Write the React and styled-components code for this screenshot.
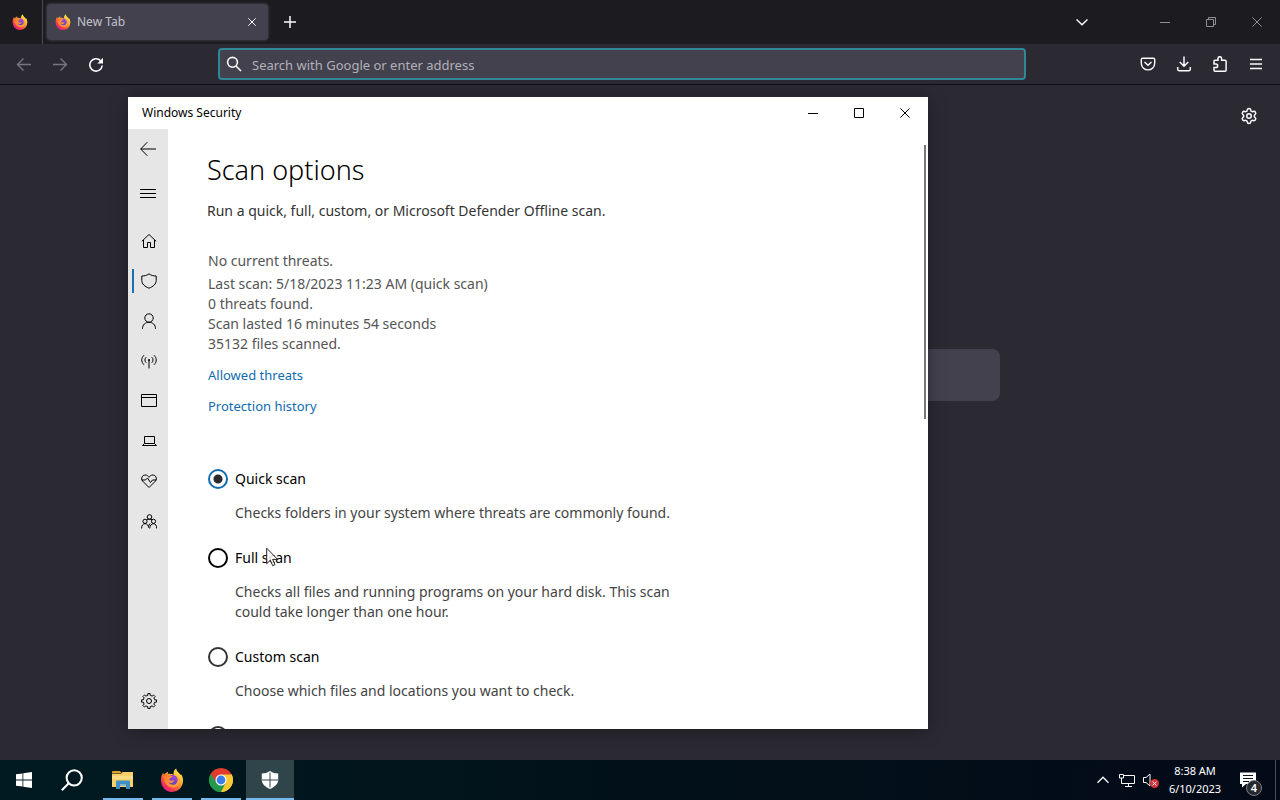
import React from "react";
import styled, { createGlobalStyle, css } from "styled-components";
import { Settings } from "lucide-react";

const Global = createGlobalStyle`
  * { box-sizing: border-box; }
  body { margin: 0; font-family: "Noto Sans", "Open Sans", sans-serif; background: #2b2a33; }
  button { border: 0; padding: 0; background: none; color: inherit; font: inherit; }
  h1, p { margin: 0; font-weight: 400; }
  svg { display: block; flex: none; }
`;

/* ---------- drawing helpers ---------- */

const Icon = ({ size = 16, box = 16, width = 1, children }) => (
  <svg
    width={size}
    height={size}
    viewBox={`0 0 ${box} ${box}`}
    fill="none"
    stroke="currentColor"
    strokeWidth={width}
    aria-hidden="true"
  >
    {children}
  </svg>
);

const gearPath = (teeth, outer, inner, c) => {
  const step = (Math.PI * 2) / teeth;
  const at = (r, a) => `${(c + r * Math.cos(a)).toFixed(2)} ${(c + r * Math.sin(a)).toFixed(2)}`;
  let d = "";
  for (let i = 0; i < teeth; i += 1) {
    const a = i * step - Math.PI / 2;
    d += `${i ? "L" : "M"}${at(inner, a - step * 0.27)}L${at(outer, a - step * 0.2)}L${at(outer, a + step * 0.2)}L${at(inner, a + step * 0.27)}`;
  }
  return `${d}Z`;
};

const FirefoxLogo = ({ size, id }) => (
  <svg width={size} height={size} viewBox="0 0 24 24" aria-hidden="true">
    <defs>
      <linearGradient id={`${id}-body`} x1="0.85" y1="0.1" x2="0.2" y2="0.95">
        <stop offset="0" stopColor="#fff04a" />
        <stop offset="0.3" stopColor="#ffb52e" />
        <stop offset="0.58" stopColor="#ff6b33" />
        <stop offset="0.82" stopColor="#f5325a" />
        <stop offset="1" stopColor="#e0218f" />
      </linearGradient>
      <linearGradient id={`${id}-globe`} x1="0.7" y1="0" x2="0.3" y2="1">
        <stop offset="0" stopColor="#a04ae0" />
        <stop offset="1" stopColor="#5a3fb8" />
      </linearGradient>
      <linearGradient id={`${id}-fox`} x1="0" y1="0" x2="1" y2="0.4">
        <stop offset="0" stopColor="#ff7a2c" />
        <stop offset="1" stopColor="#ffa03a" />
      </linearGradient>
    </defs>
    <path
      fill={`url(#${id}-body)`}
      d="M1 12.600C.8 9.500 1.500 6.900 3.200 4.500c.1 1 .4 1.700.9 2.200C5 5.400 6.500 4.200 8.200 3.700c-.4.8-.5 1.500-.3 2.300 1.800-.4 4.200-.2 5.700.7C13.200 4.300 14 2 16.200.4c.2 2.300 1.500 3.500 3 4.900.6.600 1 1.300 1.300 2l.4-1.300c1.600 2.100 2.300 4.500 2.100 7.200A11 11 0 0 1 1 12.600Z"
    />
    <circle cx="12.300" cy="12.100" r="5.400" fill={`url(#${id}-globe)`} />
    <path
      fill={`url(#${id}-fox)`}
      d="M4 7.200c1.500-1 3.500-1.100 5.200-.2 1.100.6 1.900.9 3.400 1-.2 1.300-1.300 1.700-2.600 2.200-.9.400-.6 1.700.3 2.200 1.300.8 2.700-.3 4 .2-.7 2.300-3.600 3-5.900 1.700 1.900 3 6.300 3.400 8.500.6 1.600-2.100 1.300-5-.4-6.800 2.700 1.100 4.100 4.200 3 7.200-1.300 3.300-5 5-8.500 4C6 18 3 13 4 7.200Z"
    />
  </svg>
);

const ChromeLogo = () => (
  <svg width="24" height="24" viewBox="0 0 24 24" aria-hidden="true">
    <path fill="#e33b2e" d="M12 12 1.610 6A12 12 0 0 1 22.390 6Z" />
    <path fill="#fcc934" d="M12 12 22.390 6A12 12 0 0 1 12 24Z" />
    <path fill="#239a4b" d="M12 12V24A12 12 0 0 1 1.610 6Z" />
    <path fill="#e33b2e" d="M12 6.500H22.660L22.390 6 12 4 1.610 6 7.200 14.700Z" />
    <path fill="#fcc934" d="M22.660 6.500H12L16.800 14.700 12 24c6 0 12-5 12-12a12 12 0 0 0-1.340-5.500Z" />
    <path fill="#239a4b" d="M1.610 6 7.200 14.700c2 3.400 6.400 3.900 9.600 0L12 24A12 12 0 0 1 1.610 6Z" />
    <circle cx="12" cy="12" r="5.500" fill="#fff" />
    <circle cx="12" cy="12" r="4.400" fill="#3a7de8" />
  </svg>
);

const FolderLogo = () => (
  <svg width="24" height="22" viewBox="0 0 24 22" aria-hidden="true">
    <path fill="#e0a02c" d="M1 3a1 1 0 0 1 1-1h7l2 2.500h-10Z" />
    <path fill="#f9d067" d="M1 5h9l1.500-2H22v15H1Z" />
    <path fill="#fbdc86" d="M1 7h21v3H1Z" />
    <path fill="#3f8fc4" d="M5 12.500a1 1 0 0 1 1-1h12a1 1 0 0 1 1 1V20h-4v-4.500H9V20H5Z" />
    <path fill="#7db9dc" d="M9 15.500h6V17H9Z" />
  </svg>
);

const Minimize = () => <Icon size={10} box={10}><path d="M0 5.500h10" /></Icon>;
const Close = () => <Icon size={10} box={10}><path d="m.4.4 9.200 9.200m0-9.200L.4 9.600" /></Icon>;

/* ---------- browser ---------- */

const Screen = styled.div`
  position: relative;
  display: flex;
  flex-direction: column;
  min-height: 100vh;
  overflow: hidden;
  background: #2b2a33;
`;

const TabStrip = styled.header`
  display: flex;
  height: 44px;
  background: #1c1b20;
  color: #fbfbfe;
`;

const PinnedTab = styled.button`
  display: grid;
  place-items: center;
  width: 43px;
  padding-right: 2px;
  border-right: 1px solid #4a4a52;
`;

const Tab = styled.div`
  display: flex;
  align-items: center;
  gap: 6px;
  width: 221px;
  height: 36px;
  margin: 4px 0 0 4px;
  padding: 0 4px 0 8px;
  border-radius: 4px;
  background: #42414d;
  box-shadow: 0 0 3px #55545f;
`;

const TabTitle = styled.span`
  flex: 1;
  font-size: 12px;
  line-height: 16px;
  color: #c3c2ca;
`;

const IconButton = styled.button`
  display: grid;
  place-items: center;
  width: ${(p) => p.$w || 36}px;
  height: ${(p) => p.$h || 36}px;
  color: ${(p) => p.$color || "#fbfbfe"};
`;

const WindowButtons = styled.div`
  display: flex;
  margin-left: ${(p) => (p.$gap ? "42px" : "auto")};
`;

const PushRight = styled.div`
  display: flex;
  margin-left: auto;
`;

const Toolbar = styled.nav`
  display: flex;
  align-items: center;
  height: 41px;
  padding: 0 6px;
  background: #2b2a33;
  border-bottom: 1px solid #0f0f14;
`;

const Spring = styled.span`
  flex: 13 1 0;
`;

const AddressBar = styled.label`
  flex: 99 1 0;
  display: flex;
  align-items: center;
  gap: 10px;
  height: 32px;
  padding: 0 6px;
  border: 2px solid #2f8795;
  border-radius: 4px;
  background: #42414d;
  color: #fbfbfe;
`;

const AddressInput = styled.input`
  flex: 1;
  min-width: 0;
  padding: 1px 0 0;
  border: 0;
  outline: 0;
  background: none;
  color: #fbfbfe;
  font: 13px/20px "Noto Sans", "Open Sans", sans-serif;
  &::placeholder { color: #b2b1ba; opacity: 1; }
`;

const NewTabPage = styled.main`
  flex: 1;
  display: flex;
  flex-direction: column;
  color: #fbfbfe;
`;

const PageTools = styled.div`
  display: flex;
  justify-content: flex-end;
  padding: 13px 13px 0 0;
`;

const PageSearch = styled.input`
  align-self: center;
  width: 720px;
  max-width: 90%;
  height: 52px;
  margin-top: 215px;
  border: 0;
  border-radius: 8px;
  background: #42414d;
`;

/* ---------- security window ---------- */

const Window = styled.section`
  position: absolute;
  top: 97px;
  bottom: 71px;
  left: 10%;
  width: 62.5%;
  display: flex;
  flex-direction: column;
  background: #fff;
  color: #000;
  box-shadow: 0 2px 16px rgba(0, 0, 0, 0.35);
`;

const TitleBar = styled.header`
  display: flex;
  align-items: center;
  height: 32px;
  padding-left: 14px;
  font-size: 12px;
  line-height: 16px;
`;

const WindowBody = styled.div`
  flex: 1;
  min-height: 0;
  display: flex;
`;

const SideNav = styled.nav`
  display: flex;
  flex-direction: column;
  width: 40px;
  padding-bottom: 8px;
  background: #e6e6e6;
`;

const NavItem = styled.button`
  display: grid;
  place-items: center;
  width: 40px;
  height: 40px;
  padding-left: ${(p) => (p.$top ? 0 : 2)}px;
  color: #000;
  ${(p) =>
    p.$active &&
    css`
      background: linear-gradient(#1a6fb5, #1a6fb5) 4px center / 2px 24px no-repeat;
    `}
`;

const NavGroup = styled.div`
  display: flex;
  flex-direction: column;
  margin-top: ${(p) => p.$top};
`;

const Pane = styled.div`
  flex: 1;
  min-width: 0;
  overflow: hidden;
  padding-top: 23px;
  font-size: 14px;
  line-height: 20px;
`;

const PaneHeader = styled.div`
  padding-left: 39px;
  color: #333;
`;

const Heading = styled.h1`
  margin-bottom: 13px;
  font-size: 27px;
  line-height: 36px;
  font-weight: 300;
  color: #000;
`;

const Status = styled.div`
  padding: 30px 0 0 40px;
  color: #555;
`;

const StatusTitle = styled.p`
  margin-bottom: 3px;
`;

const Links = styled.div`
  display: flex;
  flex-direction: column;
  align-items: flex-start;
  gap: 11px;
  padding: 11px 0 0 40px;
`;

const TextLink = styled.a`
  font-size: 13px;
  color: #0f6cb0;
  text-decoration: none;
`;

const Options = styled.form`
  display: flex;
  flex-direction: column;
  gap: 25px;
  padding: 53px 0 0 40px;
`;

const Option = styled.div`
  display: flex;
  flex-direction: column;
  gap: 14px;
`;

const OptionLabel = styled.label`
  display: flex;
  align-items: center;
  gap: 7px;
  height: 20px;
`;

const Radio = styled.input`
  appearance: none;
  flex: none;
  width: 20px;
  height: 20px;
  margin: 0;
  border: 2px solid ${(p) => (p.$hot ? "#000" : "#333")};
  border-radius: 50%;
  &:checked {
    border-color: #0f6cb0;
    background: radial-gradient(circle, #2b2b2b 4px, transparent 5px);
  }
`;

const OptionText = styled.p`
  max-width: 484px;
  padding-left: 27px;
  color: #444;
`;

const ScrollTrack = styled.div`
  width: 2px;
  margin: 16px 2px 0 0;
`;

const ScrollThumb = styled.div`
  height: 47%;
  background: #77777c;
`;

const Cursor = styled.svg`
  position: absolute;
  left: 266px;
  top: 547px;
`;

/* ---------- taskbar ---------- */

const Taskbar = styled.footer`
  display: flex;
  height: 40px;
  color: #fff;
  background: linear-gradient(90deg, #001a21, #021119 50%, #030a18);
`;

const TaskGroup = styled.div`
  display: flex;
  gap: ${(p) => p.$gap || 0}px;
  margin-left: ${(p) => p.$left || 0}px;
`;

const TaskButton = styled.button`
  display: grid;
  place-items: center;
  width: 48px;
  height: 40px;
  ${(p) =>
    p.$open &&
    css`
      background: linear-gradient(#76b9ed, #76b9ed) center bottom / ${p.$active ? 48 : 40}px 2px no-repeat
        ${p.$active ? "#304549" : "transparent"};
    `}
`;

const Tray = styled.div`
  display: flex;
  align-items: center;
  margin-left: auto;
`;

const Clock = styled.time`
  width: 64px;
  text-align: center;
  font-size: 11px;
  line-height: 18px;
`;

const Notify = styled.button`
  position: relative;
  display: grid;
  place-items: center;
  width: 48px;
  height: 40px;
  padding-right: 7px;
`;

const NotifyCount = styled.span`
  position: absolute;
  left: 19px;
  top: 20px;
  width: 16px;
  height: 16px;
  border: 1px solid #7b7e86;
  border-radius: 50%;
  background: #25282f;
  font-size: 11px;
  line-height: 14px;
  font-weight: 600;
  text-align: center;
`;

const ShowDesktop = styled.button`
  width: 5px;
  height: 40px;
  border-left: 1px solid #4a5260;
`;

/* ---------- data ---------- */

const navIcons = [
  ["Home", <path d="M.800 8.300 8 1.500l7.200 6.800M2.500 7v7.500h4v-5h3v5h4V7" />],
  ["Virus & threat protection", <path d="M8 .800C6 2.400 3.500 3 .800 3v4.500c0 3.600 3 6 7.200 7.700 4.200-1.700 7.200-4.100 7.200-7.700V3C12.500 3 10 2.400 8 .800Z" />],
  ["Account protection", <><circle cx="8" cy="5" r="4.200" /><path d="M1.500 15.800c0-4 2.700-6.500 6.500-6.500s6.500 2.500 6.500 6.500" /></>],
  ["Firewall & network protection", <><path d="M8 7v8.500M3 2.200C.2 5-.2 8.500 3 11.800M13 2.200c2.800 2.800 3.200 6.300 0 9.600M5.200 4.200c-1.700 1.800-1.700 3.800 0 5.600M10.800 4.200c1.700 1.800 1.700 3.800 0 5.600" /><circle cx="8" cy="7" r="1" fill="currentColor" stroke="none" /></>],
  ["App & browser control", <path d="M.5 1.500h15v12H.5ZM.5 4.500h15" />],
  ["Device security", <path d="M3.500 3.500h10v7h-10ZM3.500 10.500l-2 2h14l-2-2" />],
  ["Device performance & health", <path d="M8 14.500 1.500 8C-.3 5.500 1 2 4.200 2 6 2 7.200 3 8 4.300 8.800 3 10 2 11.800 2 15 2 16.300 5.500 14.500 8ZM.8 7h3.700l2-2 3 4.500L11.500 7h3.700" />],
  ["Family options", <><circle cx="8.500" cy="4" r="2.300" /><circle cx="4" cy="8.300" r="2.100" /><circle cx="12.500" cy="8.300" r="2.100" /><path d="M.6 15.500c0-3 1.300-4.800 3.400-4.800s3.400 1.500 3.700 4M8.700 15.500c.1-3 1.700-4.800 3.800-4.800s3.200 1.800 3.200 4.800M5.500 7c.8-.7 1.800-.9 3-.9s2 .2 2.700.7M7.500 13 9 10.500" /></>],
];

const scanOptions = [
  { id: "quick", label: "Quick scan", text: "Checks folders in your system where threats are commonly found.", checked: true },
  { id: "full", label: "Full scan", text: "Checks all files and running programs on your hard disk. This scan could take longer than one hour.", hot: true },
  { id: "custom", label: "Custom scan", text: "Choose which files and locations you want to check." },
  { id: "offline", label: "" },
];

export default function App() {
  return (
    <Screen>
      <Global />
      <TabStrip>
        <PinnedTab aria-label="Firefox View"><FirefoxLogo size={16} id="pin" /></PinnedTab>
        <Tab>
          <FirefoxLogo size={16} id="tab" />
          <TabTitle>New Tab</TabTitle>
          <IconButton $w={24} $h={24} aria-label="Close tab">
            <Icon size={8} box={8}><path d="m.3.3 7.400 7.400m0-7.400L.3 7.700" /></Icon>
          </IconButton>
        </Tab>
        <IconButton $w={44} $h={44} aria-label="Open a new tab">
          <Icon size={12} box={12} width={1.500}><path d="M6 0v12M0 6h12" /></Icon>
        </IconButton>
        <PushRight>
          <IconButton $w={36} $h={44} aria-label="List all tabs">
            <Icon size={12} box={12} width={1.500}><path d="m.5 3.500 5.500 5.300 5.500-5.300" /></Icon>
          </IconButton>
        </PushRight>
        <WindowButtons $gap>
          <IconButton $w={46} $h={44} $color="#8f8f96" aria-label="Minimize"><Minimize /></IconButton>
          <IconButton $w={46} $h={44} $color="#8f8f96" aria-label="Restore">
            <Icon size={10} box={10}><path d="M.5 2.500h7v7h-7ZM2.500 2.500v-2h7v7h-2" /></Icon>
          </IconButton>
          <IconButton $w={46} $h={44} $color="#8f8f96" aria-label="Close"><Close /></IconButton>
        </WindowButtons>
      </TabStrip>

      <Toolbar>
        <IconButton $color="#77767f" aria-label="Back">
          <Icon width={1.400}><path d="M15 8.500H1.500M7.500 2.500l-6 6 6 6" /></Icon>
        </IconButton>
        <IconButton $color="#77767f" aria-label="Forward">
          <Icon width={1.400}><path d="M1 8.500h13.500M8.500 2.500l6 6-6 6" /></Icon>
        </IconButton>
        <IconButton aria-label="Reload">
          <Icon width={1.600}>
            <path d="M12.700 4.800A6.200 6.200 0 1 0 14.200 9.500" />
            <path d="M15 1.800v5.700H9.300Z" fill="currentColor" stroke="none" />
          </Icon>
        </IconButton>
        <Spring />
        <AddressBar>
          <Icon width={1.600}><circle cx="6.500" cy="6.300" r="4.900" /><path d="m10 10 5 5" /></Icon>
          <AddressInput aria-label="Address" placeholder="Search with Google or enter address" />
        </AddressBar>
        <Spring />
        <IconButton aria-label="Save to Pocket">
          <Icon width={1.400}>
            <path d="M2.700 2.200h10.600a1.400 1.400 0 0 1 1.400 1.400v3.600a6.700 6.700 0 0 1-13.400 0V3.600a1.400 1.400 0 0 1 1.400-1.400Z" />
            <path d="M4.500 6 8 9.300 11.500 6" />
          </Icon>
        </IconButton>
        <IconButton aria-label="Downloads">
          <Icon width={1.500}><path d="M8 .5V10M3.800 6 8 10.200 12.200 6M1.700 11v2.200a1.500 1.500 0 0 0 1.500 1.500h9.600a1.500 1.500 0 0 0 1.500-1.500V11" /></Icon>
        </IconButton>
        <IconButton aria-label="Extensions">
          <Icon width={1.500}><path d="M6 4.300V2.500a1.800 1.800 0 0 1 3.600 0v1.800h3.500a1 1 0 0 1 1 1v8.900a1 1 0 0 1-1 1H3a1 1 0 0 1-1-1v-2.700h1.900a1.800 1.800 0 0 0 0-3.600H2V5.300a1 1 0 0 1 1-1Z" /></Icon>
        </IconButton>
        <IconButton aria-label="Open menu">
          <Icon size={14} box={14} width={1.500}><path d="M1 2.500h12M1 7h12M1 11.500h12" /></Icon>
        </IconButton>
      </Toolbar>

      <NewTabPage>
        <PageTools>
          <IconButton aria-label="Personalize new tab"><Settings size={18} strokeWidth={2} /></IconButton>
        </PageTools>
        <PageSearch aria-label="Search the web" />
      </NewTabPage>

      <Window>
        <TitleBar>
          Windows Security
          <WindowButtons>
            <IconButton $w={46} $h={32} $color="#000" aria-label="Minimize"><Minimize /></IconButton>
            <IconButton $w={46} $h={32} $color="#000" aria-label="Maximize">
              <Icon size={10} box={10}><path d="M.5.5h9v9h-9Z" /></Icon>
            </IconButton>
            <IconButton $w={46} $h={32} $color="#000" aria-label="Close"><Close /></IconButton>
          </WindowButtons>
        </TitleBar>
        <WindowBody>
          <SideNav>
            <NavItem $top aria-label="Back"><Icon><path d="M16 8H.8M7.300 1.200.7 8l6.600 6.800" /></Icon></NavItem>
            <NavGroup $top="5px">
              <NavItem $top aria-label="Menu"><Icon><path d="M0 3.500h16M0 7.500h16M0 11.500h16" /></Icon></NavItem>
            </NavGroup>
            <NavGroup $top="7px">
              {navIcons.map(([name, art], i) => (
                <NavItem key={name} aria-label={name} $active={i === 1}><Icon>{art}</Icon></NavItem>
              ))}
            </NavGroup>
            <NavGroup $top="auto">
              <NavItem aria-label="Settings">
                <Icon><path d={gearPath(8, 7.500, 5.800, 8)} strokeLinejoin="round" /><circle cx="8" cy="8" r="2.500" /></Icon>
              </NavItem>
            </NavGroup>
          </SideNav>
          <Pane>
            <PaneHeader>
              <Heading>Scan options</Heading>
              <p>Run a quick, full, custom, or Microsoft Defender Offline scan.</p>
            </PaneHeader>
            <Status>
              <StatusTitle>No current threats.</StatusTitle>
              <p>Last scan: 5/18/2023 11:23 AM (quick scan)</p>
              <p>0 threats found.</p>
              <p>Scan lasted 16 minutes 54 seconds</p>
              <p>35132 files scanned.</p>
            </Status>
            <Links>
              <TextLink href="#allowed">Allowed threats</TextLink>
              <TextLink href="#history">Protection history</TextLink>
            </Links>
            <Options>
              {scanOptions.map((o) => (
                <Option key={o.id}>
                  <OptionLabel>
                    <Radio type="radio" name="scan" value={o.id} defaultChecked={o.checked} $hot={o.hot} />
                    {o.label}
                  </OptionLabel>
                  {o.text && <OptionText>{o.text}</OptionText>}
                </Option>
              ))}
            </Options>
          </Pane>
          <ScrollTrack><ScrollThumb /></ScrollTrack>
        </WindowBody>
      </Window>

      <Taskbar>
        <TaskGroup>
          <TaskButton aria-label="Start">
            <svg width="16" height="16" viewBox="0 0 16 16" fill="#fff" aria-hidden="true">
              <path d="M0 2.300 6.500 1.400v6.200H0ZM7.300 1.300 16 0v7.600H7.300ZM0 8.400h6.500v6.200L0 13.700ZM7.300 8.400H16V16l-8.700-1.300Z" />
            </svg>
          </TaskButton>
          <TaskButton aria-label="Search">
            <Icon size={22} box={22} width={2}><circle cx="13.200" cy="8.800" r="7.600" /><path d="m7.800 14.200-7 7" /></Icon>
          </TaskButton>
        </TaskGroup>
        <TaskGroup $gap={1} $left={3}>
          <TaskButton $open aria-label="File Explorer"><FolderLogo /></TaskButton>
          <TaskButton $open aria-label="Firefox"><FirefoxLogo size={24} id="task" /></TaskButton>
          <TaskButton $open aria-label="Chrome"><ChromeLogo /></TaskButton>
          <TaskButton $open $active aria-label="Windows Security">
            <svg width="18" height="18" viewBox="0 0 18 18" aria-hidden="true">
              <path fill="#fff" d="M9 0C6.800 1.700 3.800 2.500.8 2.500V9c0 4 3.500 7 8.200 9 4.700-2 8.200-5 8.200-9V2.500C14.200 2.500 11.200 1.700 9 0Z" />
              <path stroke="#304549" strokeWidth="1" d="M9 1.500v15M1 9h16" />
            </svg>
          </TaskButton>
        </TaskGroup>
        <Tray>
          <IconButton $w={24} $h={40} aria-label="Show hidden icons">
            <Icon size={12} box={12} width={1.300}><path d="m.5 8.700 5.500-5.500 5.500 5.500" /></Icon>
          </IconButton>
          <IconButton $w={24} $h={40} aria-label="Network">
            <Icon><path d="M4.500 3.500h11v8h-11M9.500 11.500v3M6 14.500h7M2.500 6v5.500h3M.5 2.500h4v3.500h-4Z" /></Icon>
          </IconButton>
          <IconButton $w={24} $h={40} aria-label="Volume">
            <Icon>
              <path d="M.5 5.500h2.500L7 2v12l-4-3.500H.5Z" />
              <circle cx="11.500" cy="11.500" r="4.500" fill="#d13438" stroke="none" />
              <path d="m9.600 9.600 3.800 3.800m0-3.800-3.800 3.800" />
            </Icon>
          </IconButton>
          <Clock>8:38 AM<br />6/10/2023</Clock>
          <Notify aria-label="Notifications">
            <Icon size={18} box={18}>
              <path d="M1 1.500h16v11.500H7l-4 3.500V13H1Z" fill="#fff" stroke="none" />
              <path stroke="#0a0f1c" d="M4 4.500h10M4 7.500h10M4 10.500h6" />
            </Icon>
            <NotifyCount>4</NotifyCount>
          </Notify>
          <ShowDesktop aria-label="Show desktop" />
        </Tray>
      </Taskbar>

      <Cursor width="13" height="20" viewBox="0 0 13 20" aria-hidden="true">
        <path d="M.7 1.200v15.500l3.600-3.500 2.400 5.500 2.300-1-2.400-5.300h5Z" fill="#fff" fillOpacity="0.85" stroke="#222" strokeWidth="1" />
      </Cursor>
    </Screen>
  );
}
